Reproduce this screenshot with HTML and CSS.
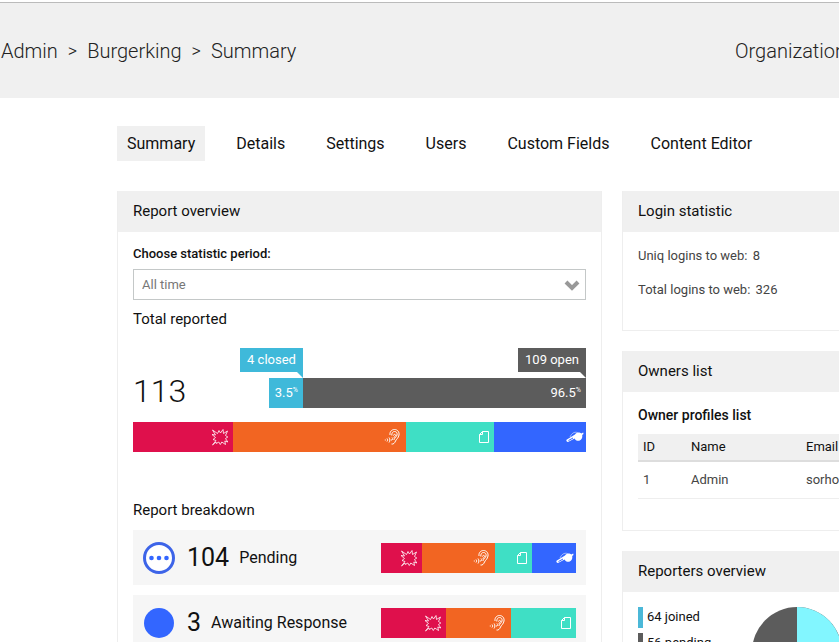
FILE: index.html
```html
<!DOCTYPE html>
<html lang="en">
<head>
<meta charset="utf-8">
<title>Burgerking Summary</title>
<link rel="stylesheet" href="styles.css">
</head>
<body>
<svg class="sprite" aria-hidden="true">
  <symbol id="i-burst" viewBox="0 0 18 18"><path d="M1.500 2l5 3.500L8 2.500l1.500 2.500L12 1.500l.500 4L16.500 3l-2 4.500 2.300 1.500-2.300 1.500 2.300 3.500-3-1 .700 3.500-3.700-2.500-1.500 2.500-1.500-2.500-2.500 1.500-.300-1.500L1.500 17 5 12.500 2 11.500l2.500-2L1 6.500l3.500.500z"/></symbol>
  <symbol id="i-ear" viewBox="0 0 18 18"><path d="M6 7C5.500 3.500 8 1.500 10.500 1.500c3 0 5 2.500 4.500 5.500-.500 3-2.500 4-3.500 6-.800 2-2 3.500-4 3M7.800 7.500C7.500 5 9 3.500 10.500 3.500c2 0 3 1.700 2.500 3.500-.500 2-2.500 3-3.200 5M9.500 7.500c0-1.500 2.300-1.500 2 0s-1.700 1-1.500 2.500M8 9.500c1.500 1 .500 3-1 2.500M5 9.500c1.200 1.500 1.200 3.500 0 5M3 10.500c.800 1 .800 2 0 3M1.300 11.500v1"/></symbol>
  <symbol id="i-page" viewBox="0 0 18 18"><path d="M8.500 3.500h6v11h-9V6.500zM8.500 3.500v3h-3"/></symbol>
  <symbol id="i-whistle" viewBox="0 0 18 18"><path class="solid" d="M.500 11.800L9 6.500C10 5 11.300 4.500 12.500 4.500c1.200 0 2 .300 2.700 1l2-1 .300 1.500-1.300 1C16.800 10 15 12.800 12.300 12.800c-1.800 0-3-.800-3.700-2.300L2 14C.800 14 0 13 .500 11.800z"/><path class="slot" d="M2.500 12.500l4.500-2.500"/><path class="cord" d="M4 9C5.500 5.500 8 3.500 11.500 4.500"/></symbol>
</svg>

<div class="app">
  <header class="topbar">
    <nav class="crumbs" aria-label="Breadcrumb">
      <a href="#">Admin</a><span>&gt;</span><a href="#">Burgerking</a><span>&gt;</span><a href="#">Summary</a>
    </nav>
    <div class="org">Organization</div>
  </header>

  <main class="content">
    <nav class="tabs" aria-label="Sections">
      <a class="tab active" href="#">Summary</a>
      <a class="tab" href="#">Details</a>
      <a class="tab" href="#">Settings</a>
      <a class="tab" href="#">Users</a>
      <a class="tab" href="#">Custom Fields</a>
      <a class="tab" href="#">Content Editor</a>
    </nav>

    <div class="columns">
      <section class="panel">
        <h2>Report overview</h2>
        <div class="panel-body">
          <label class="period-label" for="period">Choose statistic period:</label>
          <div class="select-wrap">
            <select id="period"><option>All time</option></select>
            <svg class="chevron" viewBox="0 0 16 12"><path d="M2 3l6 6 6-6"/></svg>
          </div>
          <h3>Total reported</h3>

          <div class="totals">
            <div class="total">113</div>
            <div class="split">
              <div class="part closed"><span class="tag">4 closed</span><span class="share">3.5<sup>%</sup></span></div>
              <div class="part open"><span class="tag">109 open</span><span class="share">96.5<sup>%</sup></span></div>
            </div>
          </div>

          <div class="stack">
            <div class="seg red" style="flex-grow:100"><svg><use href="#i-burst"/></svg></div>
            <div class="seg orange" style="flex-grow:172"><svg><use href="#i-ear"/></svg></div>
            <div class="seg teal" style="flex-grow:88"><svg><use href="#i-page"/></svg></div>
            <div class="seg blue" style="flex-grow:92"><svg><use href="#i-whistle"/></svg></div>
          </div>

          <h3 class="breakdown-title">Report breakdown</h3>
          <div class="rows">
            <div class="row">
              <svg class="status" viewBox="0 0 32 32"><circle class="ring" cx="16" cy="16" r="14.500"/><circle cx="8.500" cy="16" r="2.300"/><circle cx="16" cy="16" r="2.300"/><circle cx="23.500" cy="16" r="2.300"/></svg>
              <span class="count">104</span><span class="name">Pending</span>
              <div class="stack mini">
                <div class="seg red" style="flex-grow:41"><svg><use href="#i-burst"/></svg></div>
                <div class="seg orange" style="flex-grow:73"><svg><use href="#i-ear"/></svg></div>
                <div class="seg teal" style="flex-grow:37"><svg><use href="#i-page"/></svg></div>
                <div class="seg blue" style="flex-grow:44"><svg><use href="#i-whistle"/></svg></div>
              </div>
            </div>
            <div class="row">
              <svg class="status" viewBox="0 0 32 32"><circle cx="16" cy="16" r="15"/></svg>
              <span class="count">3</span><span class="name">Awaiting Response</span>
              <div class="stack mini">
                <div class="seg red" style="flex-grow:1"><svg><use href="#i-burst"/></svg></div>
                <div class="seg orange" style="flex-grow:1"><svg><use href="#i-ear"/></svg></div>
                <div class="seg teal" style="flex-grow:1"><svg><use href="#i-page"/></svg></div>
              </div>
            </div>
          </div>
        </div>
      </section>

      <div class="side">
        <section class="panel">
          <h2>Login statistic</h2>
          <div class="panel-body logins">
            <p>Uniq logins to web: <span>8</span></p>
            <p>Total logins to web: <span>326</span></p>
          </div>
        </section>

        <section class="panel">
          <h2>Owners list</h2>
          <div class="panel-body owners">
            <h4>Owner profiles list</h4>
            <table>
              <thead><tr><th class="id">ID</th><th class="who">Name</th><th>Email</th></tr></thead>
              <tbody><tr><td>1</td><td>Admin</td><td>sorho</td></tr></tbody>
            </table>
          </div>
        </section>

        <section class="panel">
          <h2>Reporters overview</h2>
          <div class="panel-body reporters">
            <ul class="legend">
              <li class="joined">64 joined</li>
              <li class="pending">56 pending</li>
            </ul>
            <svg class="pie" viewBox="0 0 90 90"><circle class="pie-pending" cx="45" cy="45" r="45"/><path class="pie-joined" d="M45 0a45 45 0 1 1-9 89.100L45 45z"/></svg>
          </div>
        </section>
      </div>
    </div>
  </main>
</div>
</body>
</html>
```
FILE: styles.css
```css
* { box-sizing: border-box; }

body {
  margin: 0;
  background: #fff;
  color: #111;
  font-family: Roboto, "Liberation Sans", sans-serif;
  font-size: 14px;
  line-height: 20px;
}

a { color: inherit; text-decoration: none; }
h2, h3, h4, p, ul { margin: 0; padding: 0; font-weight: 400; }
.sprite { display: none; }

.app { height: 100vh; overflow: hidden; }

.topbar {
  display: flex;
  align-items: center;
  justify-content: space-between;
  height: 96px;
  margin-top: 2px;
  padding-left: 1px;
  border-top: 1px solid #bbb;
  background: #f0f0f0;
  color: #222;
  font-size: 20px;
  font-weight: 300;
  line-height: 28px;
  white-space: nowrap;
}
.crumbs { display: flex; gap: 10px; }
.crumbs span { font-size: 18px; }
.org { width: 104px; overflow: hidden; }

.content { min-width: 1107px; padding: 28px 0 0 117px; }

.tabs { display: flex; gap: 21px; margin-bottom: 30px; }
.tab {
  padding: 0 10px;
  font-size: 16px;
  line-height: 35px;
  white-space: nowrap;
}
.tab.active { background: #f0f0f0; }

.columns {
  display: grid;
  grid-template-columns: 1fr 1fr;
  gap: 20px;
  align-items: start;
}
.side { display: grid; gap: 20px; }

.panel { border: 1px solid #eee; border-top: 0; }
.panel h2 {
  padding-left: 15px;
  background: #f0f0f0;
  font-size: 15px;
  line-height: 41px;
}
.panel-body { padding: 12px 15px; }

.period-label {
  display: block;
  margin-bottom: 5px;
  font-size: 13px;
  font-weight: 500;
}
.select-wrap { position: relative; }
.select-wrap select {
  display: block;
  width: 100%;
  height: 31px;
  padding: 0 8px;
  border: 1px solid #c4c8c8;
  border-radius: 0;
  background: #fff;
  appearance: none;
  color: #777;
  font: inherit;
  font-size: 13px;
}
.chevron {
  position: absolute;
  top: 10px;
  right: 6px;
  width: 16px;
  height: 12px;
  fill: none;
  stroke: #999;
  stroke-width: 4;
  pointer-events: none;
}

h3 { margin-top: 9px; font-size: 15px; }

.totals { display: flex; justify-content: space-between; margin-top: 19px; }
.total {
  align-self: flex-end;
  font-size: 32px;
  font-weight: 300;
  line-height: 34px;
}
.split { display: flex; width: 70%; }
.part {
  display: flex;
  flex-direction: column;
  align-items: flex-end;
  gap: 6px;
  width: 34px;
  color: #fff;
  font-size: 13px;
  white-space: nowrap;
}
.part.open { flex: 1; }
.tag { position: relative; padding: 0 7px; line-height: 24px; }
.tag::after {
  content: "";
  position: absolute;
  top: 100%;
  right: 0;
  border-top: 6px solid #3fb9da;
  border-left: 6px solid transparent;
}
.share { width: 100%; padding-right: 5px; line-height: 30px; text-align: right; }
.share sup { font-size: 7px; line-height: 0; }
.closed span { background: #3fb9da; }
.open span { background: #5c5c5c; }
.open .tag::after { border-top-color: #5c5c5c; }

.stack { display: flex; height: 30px; margin-top: 14px; }
.seg {
  display: flex;
  flex-basis: 0;
  align-items: center;
  justify-content: flex-end;
}
.seg svg {
  width: 18px;
  height: 18px;
  margin-right: 4px;
  fill: none;
  stroke: #fff;
  stroke-width: 1;
}
.red { background: #df104c; }
.orange { background: #f26522; }
.teal { background: #3fdfc5; }
.blue { background: #3366ff; }
.teal svg, .blue svg { margin-right: 2px; }
.red svg { stroke-opacity: 0.8; }
.solid { fill: #fff; stroke: none; }
.slot { stroke: #3366ff; }
.cord { stroke-opacity: 0.5; }

.breakdown-title { margin: 48px 0 10px; }
.rows { display: grid; gap: 10px; }
.row {
  display: flex;
  align-items: center;
  height: 55px;
  padding: 0 10px;
  background: #f6f6f6;
}
.status { width: 32px; height: 32px; fill: #3366ff; }
.ring { fill: #fff; stroke: #3d64e8; stroke-width: 3; }
.count { margin: 0 10px 0 12px; font-size: 25px; }
.name { font-size: 16px; }
.mini { width: 45%; margin: 0 0 0 auto; }

.logins { padding: 13px 15px 29px; color: #444; font-size: 13px; }
.logins p { line-height: 22px; }
.logins p + p { margin-top: 12px; }
.logins span { margin-left: 2px; }

.owners { padding-bottom: 31px; }
.owners h4 { margin: 1px 0 9px; font-weight: 500; }
table { width: 100%; border-collapse: collapse; table-layout: fixed; font-size: 13px; }
th, td { padding: 0 5px; text-align: left; font-weight: 400; }
th { height: 27px; border-bottom: 2px solid #ddd; background: #f0f0f0; }
td { height: 37px; border-bottom: 1px solid #eee; color: #444; }
.id { width: 48px; }
.who { width: 115px; }

.reporters { display: flex; gap: 38px; padding-top: 15px; }
.legend { display: grid; gap: 5px; align-content: start; width: 76px; list-style: none; }
.legend li {
  padding: 0 0 2px 4px;
  border-left: 5px solid #4bb8d8;
  line-height: 19px;
  font-size: 13px;
  white-space: nowrap;
}
.legend .pending { border-color: #5c5c5c; }
.pie { width: 90px; height: 90px; }
.pie-pending { fill: #5c5c5c; }
.pie-joined { fill: #82f6ff; }
```
